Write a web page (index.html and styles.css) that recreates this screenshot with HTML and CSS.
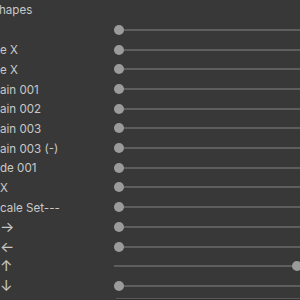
FILE: index.html
```html
<!DOCTYPE html>
<html>
<head>
<meta charset="utf-8">
<link rel="stylesheet" href="styles.css">
</head>
<body>
<div class="panel">
  <div class="heading"><span class="clip-h">hapes</span></div>
  <div class="row"><span class="lbl"></span><div class="slider"><div class="track"></div><div class="knob"></div></div></div>
  <div class="row"><span class="lbl">e X</span><div class="slider"><div class="track"></div><div class="knob"></div></div></div>
  <div class="row"><span class="lbl">e X</span><div class="slider"><div class="track"></div><div class="knob"></div></div></div>
  <div class="row"><span class="lbl">ain 001</span><div class="slider"><div class="track"></div><div class="knob"></div></div></div>
  <div class="row"><span class="lbl">ain 002</span><div class="slider"><div class="track"></div><div class="knob"></div></div></div>
  <div class="row"><span class="lbl">ain 003</span><div class="slider"><div class="track"></div><div class="knob"></div></div></div>
  <div class="row"><span class="lbl">ain 003 (-)</span><div class="slider"><div class="track"></div><div class="knob"></div></div></div>
  <div class="row"><span class="lbl">de 001</span><div class="slider"><div class="track"></div><div class="knob"></div></div></div>
  <div class="row"><span class="lbl">X</span><div class="slider"><div class="track"></div><div class="knob"></div></div></div>
  <div class="row"><span class="lbl">cale Set---</span><div class="slider"><div class="track"></div><div class="knob"></div></div></div>
  <div class="row"><span class="lbl arrow">→</span><div class="slider"><div class="track"></div><div class="knob"></div></div></div>
  <div class="row"><span class="lbl arrow">←</span><div class="slider"><div class="track"></div><div class="knob"></div></div></div>
  <div class="row"><span class="lbl arrow">↑</span><div class="slider max"><div class="track"></div><div class="knob"></div></div></div>
  <div class="row"><span class="lbl arrow">↓</span><div class="slider"><div class="track"></div><div class="knob"></div></div></div>
  <div class="field"></div>
</div>
</body>
</html>
```
FILE: styles.css
```css
html, body {
  margin: 0;
  padding: 0;
  background: #383838;
  overflow: hidden;
  width: 300px;
  height: 300px;
}
.panel {
  font-family: Inter, "Noto Sans", sans-serif;
  font-size: 11.6px;
  color: #c8c8c8;
  display: flex;
  flex-direction: column;
}
.heading {
  height: 20.1px;
  display: flex;
  align-items: center;
  overflow: hidden;
  white-space: nowrap;
}
.clip-h {
  margin-left: -1px;
}
.row {
  height: 19.7px;
  display: grid;
  grid-template-columns: 114px 188px;
  align-items: center;
  white-space: nowrap;
}
.lbl {
  overflow: hidden;
  padding-top: 1px;
  line-height: 14px;
}
.lbl.arrow {
  font-size: 15px;
  line-height: 18px;
  padding-top: 0;
}
.slider {
  position: relative;
  height: 10px;
  display: flex;
  align-items: center;
}
.track {
  width: 100%;
  height: 2px;
  background: #5e5e5e;
}
.knob {
  position: absolute;
  left: 0;
  top: 0;
  width: 10px;
  height: 10px;
  border-radius: 50%;
  background: #9b9b9b;
}
.slider.max .knob {
  left: auto;
  right: 0;
}
.field {
  margin-top: 2px;
  margin-left: 116px;
  height: 6px;
  border-top: 1px solid #5a5a5a;
  background: #2e2e2e;
}
```
